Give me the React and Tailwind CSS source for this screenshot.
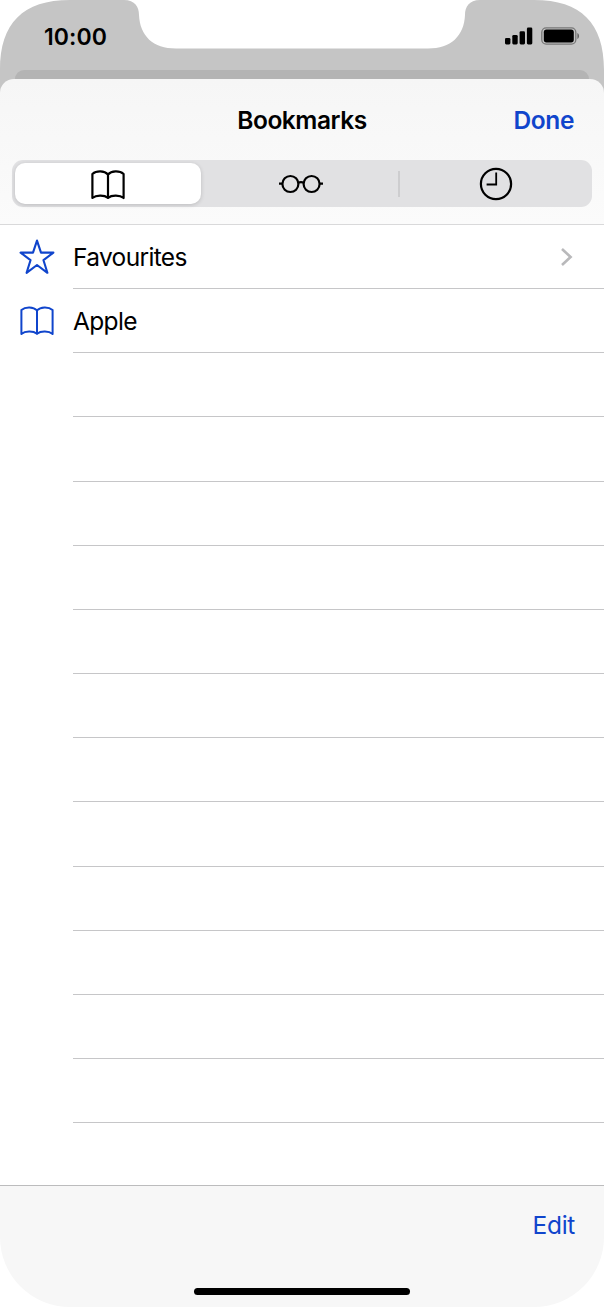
const BLUE = '#1045cc';

const TABS = [
  { id: 'bookmarks', active: true },
  { id: 'reading' },
  { id: 'history' },
];

const ITEMS = [
  { id: 'favourites', label: 'Favourites', chevron: true },
  { id: 'apple', label: 'Apple' },
];

const EMPTY_ROWS = 12;

function BookIcon({ color = '#000', strokeWidth = 2.2 }) {
  return (
    <svg width="34" height="30" viewBox="0 0 34 30" fill="none" stroke={color} strokeWidth={strokeWidth} strokeLinejoin="round" strokeLinecap="round">
      <path d="M17 4.4C13.5 .6 5.5 .4 1.4 4V28C5 25 13 24.6 17 27.8C21 24.6 29 25 32.6 28V4C28.5 .4 20.5 .6 17 4.4Z" />
      <path d="M17 4.4V27.6" />
    </svg>
  );
}

function GlassesIcon() {
  return (
    <svg width="44" height="20" viewBox="0 0 44 20" fill="none" stroke="#000" strokeWidth="2.2">
      <circle cx="11.4" cy="10" r="8" />
      <circle cx="32.6" cy="10" r="8" />
      <path d="M0 9.7H3.4M40.6 9.7H44M19 8.9C20.6 8 23.4 8 25 8.9" />
    </svg>
  );
}

function ClockIcon() {
  return (
    <svg width="34" height="34" viewBox="0 0 34 34" fill="none" stroke="#000" strokeWidth="2.2">
      <circle cx="17" cy="17" r="15.1" />
      <path d="M17.2 5.6V17.5H7.6" strokeWidth="1.8" />
    </svg>
  );
}

function StarIcon() {
  return (
    <svg width="36" height="36" viewBox="0 0 36 36" fill="none" stroke={BLUE} strokeWidth="2.1" strokeLinejoin="round">
      <path d="M18 1.6L22 13.6H34.4L24.5 21.2L28.4 33.8L18 26L7.6 33.8L11.5 21.2L1.6 13.6H14Z" />
    </svg>
  );
}

function Signal() {
  return (
    <svg width="28" height="18" viewBox="0 0 28 18">
      <rect x="0" y="11" width="5.4" height="6.4" rx="1.3" />
      <rect x="7.3" y="8" width="5.4" height="9.4" rx="1.3" />
      <rect x="14.6" y="4.3" width="5.4" height="13.1" rx="1.3" />
      <rect x="21.9" y="0.6" width="5.4" height="16.8" rx="1.3" />
    </svg>
  );
}

function Battery() {
  return (
    <svg width="39" height="18" viewBox="0 0 39 18">
      <rect x="0.8" y="0.8" width="34" height="16.4" rx="4.4" fill="none" stroke="#777" strokeWidth="1.3" />
      <rect x="2.8" y="2.6" width="30" height="12.8" rx="2.6" />
      <path d="M36.4 6V12C38.6 11 38.6 7 36.4 6Z" fill="#666" />
    </svg>
  );
}

function StatusBar() {
  return (
    <div className="relative h-[70px] bg-[#c5c5c5]">
      <svg className="absolute top-0 left-0" width="604" height="70" viewBox="0 0 604 70">
        <path d="M0 0H604V70C604 23 581 0 534 0H480C469 0 465 7 465 15C464 36 451 48.5 428 48.5H176C153 48.5 140 36 139 15C139 7 135 0 124 0H70C23 0 0 23 0 70Z" fill="#fff" />
      </svg>
      <div className="relative flex h-full items-start justify-between pt-[22px] pr-[24.5px] pl-[44px]">
        <span className="text-[23px] leading-[30px] font-semibold tracking-[0.1px]">10:00</span>
        <div className="flex gap-[8px] pt-[5px]">
          <Signal />
          <Battery />
        </div>
      </div>
    </div>
  );
}

function Segmented() {
  return (
    <div className="mx-[12px] grid h-[47px] grid-cols-[190px_198px_192px] rounded-[11px] bg-[#e1e1e3]">
      {TABS.map(t => (
        <button
          key={t.id}
          className={t.active
            ? 'my-[3px] mr-px ml-[3px] flex items-center justify-center rounded-[10px] bg-white pt-[2px] shadow-[0_1px_4px_rgba(0,0,0,0.16)]'
            : 'flex items-center justify-center'}
        >
          {t.id === 'bookmarks' && <BookIcon />}
          {t.id === 'reading' && (
            <div className="flex w-full items-center">
              <div className="flex flex-1 justify-center pl-[2px]"><GlassesIcon /></div>
              <div className="h-[26px] w-[2px] bg-[#cdcdcf]" />
            </div>
          )}
          {t.id === 'history' && <ClockIcon />}
        </button>
      ))}
    </div>
  );
}

function Row({ item }) {
  return (
    <div className="flex h-[64.16px]">
      <div className="flex w-[73px] items-center pl-[19.5px]">
        {item?.id === 'favourites' && <span className="-ml-px"><StarIcon /></span>}
        {item?.id === 'apple' && <BookIcon color={BLUE} strokeWidth={2} />}
      </div>
      <div className="flex flex-1 items-center justify-between border-b border-[#c6c6c8] pr-[31px]">
        {item && <span className="pt-px text-[24.5px] leading-[30px] tracking-[-0.65px]">{item.label}</span>}
        {item?.chevron && (
          <svg width="13" height="20" viewBox="0 0 13 20" fill="none" stroke="#b9b9bb" strokeWidth="2.6">
            <path d="M2 2L10.6 10L2 18" />
          </svg>
        )}
      </div>
    </div>
  );
}

export default function App() {
  return (
    <div className="flex h-[1307px] w-[604px] flex-col overflow-hidden bg-white text-black" style={{ fontFamily: 'Inter, "Liberation Sans", sans-serif' }}>
      <StatusBar />
      {/* edge of the page sitting behind the sheet */}
      <div className="h-[9px] bg-[#c5c5c5] px-[15px]">
        <div className="h-full rounded-t-[14px] bg-[#b4b4b4]" />
      </div>

      <div className="bg-[#c5c5c5]">
        <header className="h-[146px] rounded-t-[14px] border-b-[1.5px] border-[#d9d9da] bg-linear-to-b from-[#f6f6f6] to-[#fbfbfb]">
          <div className="grid h-[81px] grid-cols-[1fr_auto_1fr] items-center pr-[30px] pl-[30px]">
            <span />
            <h1 className="text-[24.5px] leading-[30px] font-semibold tracking-[-0.45px]">Bookmarks</h1>
            <button className="justify-self-end text-[24.5px] leading-[30px] font-semibold tracking-[-0.4px] text-[#1045cc]">Done</button>
          </div>
          <Segmented />
        </header>
      </div>

      <main className="h-[960px] overflow-hidden">
        {ITEMS.map(item => <Row key={item.id} item={item} />)}
        {Array.from({ length: EMPTY_ROWS }, (_, i) => <Row key={i} />)}
      </main>

      <footer className="flex flex-1 flex-col items-center justify-between rounded-b-[70px] border-t border-[#bcbcbd] bg-[#f7f7f7] pb-[12px]">
        <button className="mt-[24px] mr-[29px] self-end text-[24.5px] leading-[30px] tracking-[-0.3px] text-[#1045cc]">Edit</button>
        <div className="h-[7px] w-[216px] rounded-full bg-black" />
      </footer>
    </div>
  );
}
